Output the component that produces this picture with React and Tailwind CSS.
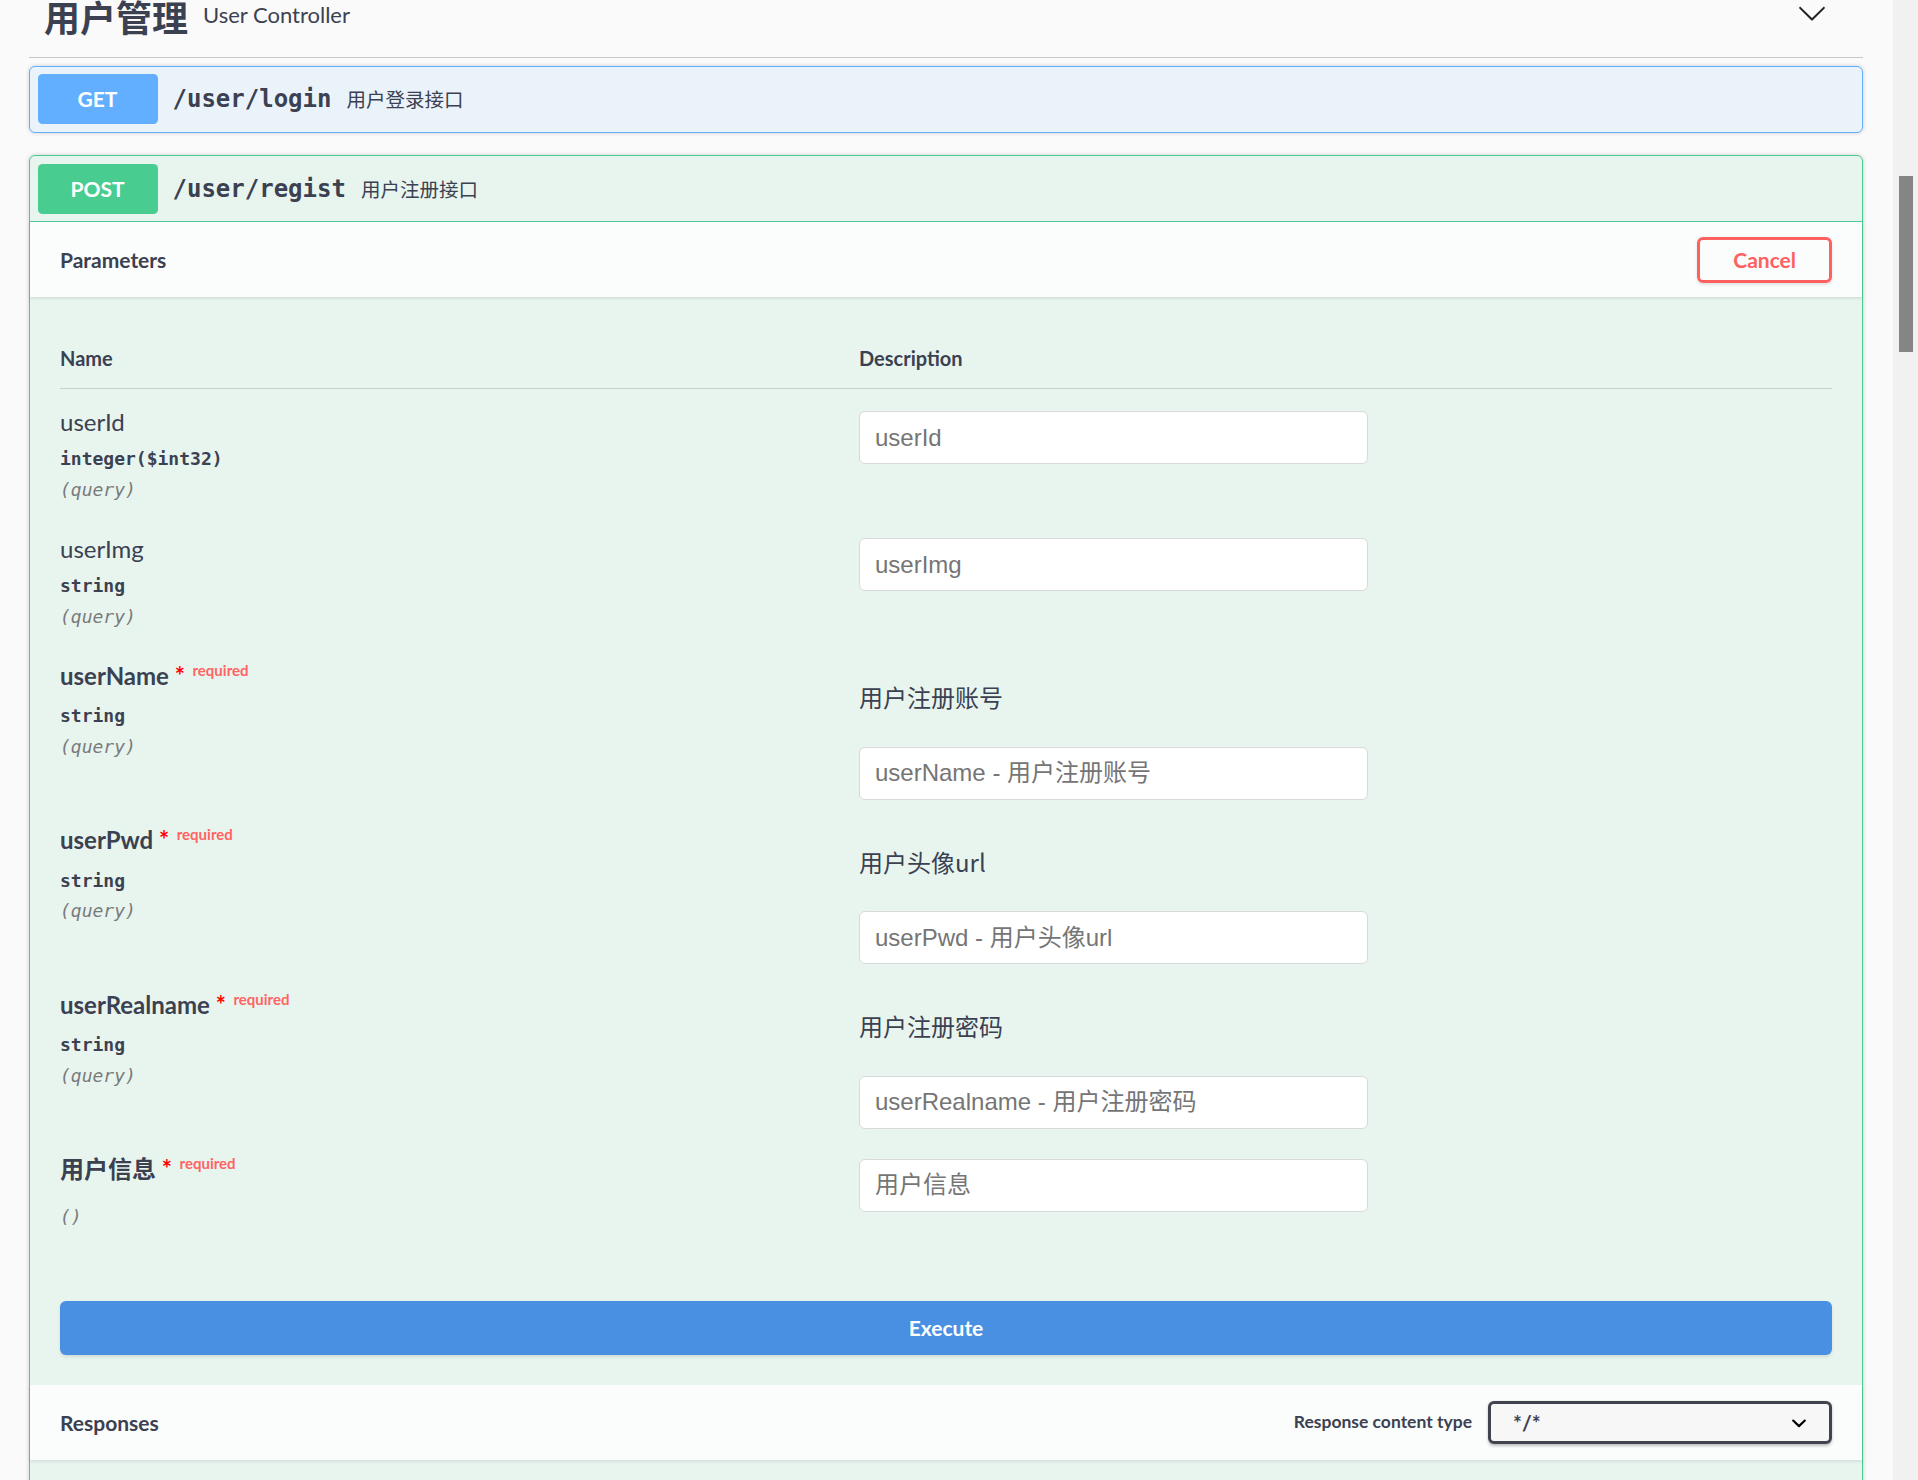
import React from 'react';

const params = [
  { name: 'userId', type: 'integer($int32)', inn: '(query)', required: false, desc: null, ph: 'userId' },
  { name: 'userImg', type: 'string', inn: '(query)', required: false, desc: null, ph: 'userImg' },
  { name: 'userName', type: 'string', inn: '(query)', required: true, desc: '用户注册账号', ph: 'userName - 用户注册账号' },
  { name: 'userPwd', type: 'string', inn: '(query)', required: true, desc: '用户头像url', ph: 'userPwd - 用户头像url' },
  { name: 'userRealname', type: 'string', inn: '(query)', required: true, desc: '用户注册密码', ph: 'userRealname - 用户注册密码' },
  { name: '用户信息', type: '', inn: '()', required: true, desc: null, ph: '用户信息', last: true },
];

function ParamRow({ p }) {
  return (
    <div className="grid grid-cols-[799px_1fr]">
      <div className={p.last ? 'flex flex-col pt-[15px] pb-[13px]' : 'flex flex-col pt-[15px] pb-[15px]'}>
        <div className={`text-[24px] leading-[36px] text-[#3b4151] whitespace-nowrap ${p.required ? 'font-bold' : 'font-normal'}`}>
          {p.name}
          {p.required && (
            <>
              <span className="text-[#ff0000]">&nbsp;*</span>
              <span className="relative top-[-9px] px-[7.5px] text-[15px] font-bold text-[#ff6464]">required</span>
            </>
          )}
        </div>
        <div className="py-[7.5px] text-[18px] leading-[23px] font-[family-name:'DejaVu_Sans_Mono',monospace] font-semibold text-[#3b4151]">
          {p.type}
        </div>
        <div className="text-[18px] leading-[23px] italic font-[family-name:'DejaVu_Sans_Mono',monospace] text-[#7a7a7a]">
          {p.inn}
        </div>
      </div>
      <div className="flex flex-col pt-[15px]">
        {p.desc && (
          <div className="mt-[24.5px] mb-[27px] text-[24px] leading-[30px] text-[#3b4151] font-[family-name:'Noto_Sans_CJK_SC',sans-serif]">
            {p.desc}
          </div>
        )}
        <input
          type="text"
          placeholder={p.ph}
          className="block my-[7.5px] w-[509px] h-[53px] px-[15px] border-[1.5px] border-[#d9d9d9] rounded-[6px] bg-white text-[24px] font-[family-name:'Liberation_Sans','Noto_Sans_CJK_SC',sans-serif] placeholder:text-[#757575] outline-none"
        />
      </div>
    </div>
  );
}

function Summary({ method, path, desc, color, open }) {
  return (
    <div className={`flex items-center p-[7.5px] ${open ? 'border-b-[1.5px] border-[#49cc90]' : ''}`}>
      <div className={`min-w-[120px] py-[9px] px-[22.5px] rounded-[4.5px] text-center text-white text-[21px] leading-[32px] font-bold ${color}`}>
        {method}
      </div>
      <span className="px-[15px] text-[24px] leading-[30px] font-[family-name:'DejaVu_Sans_Mono',monospace] font-semibold text-[#3b4151]">
        {path}
      </span>
      <span className="text-[19.5px] text-[#3b4151] font-[family-name:'Noto_Sans_CJK_SC',sans-serif]">{desc}</span>
    </div>
  );
}

export default function App() {
  return (
    <div className="flex h-[1480px] w-[1918px] overflow-hidden bg-[#fafafa] font-[family-name:Lato,'Noto_Sans_CJK_SC',sans-serif] text-[#3b4151]">
      <div className="flex-1 pl-[29px] pr-[30px]">
        {/* Tag header */}
        <div className="flex items-center h-[58px] pb-[25px] pl-[15px] pr-[36px] border-b-[1.5px] border-[#c4c6cb]">
          <span className="text-[36px] leading-[36px] font-bold font-[family-name:'Noto_Sans_CJK_SC',sans-serif] text-[#3b4151]">用户管理</span>
          <span className="flex-1 px-[15px] mb-[4px] text-[22px] leading-[25px] text-[#3b4151]">User Controller</span>
          <svg width="30" height="30" viewBox="0 0 20 20" className="mb-[6px]">
            <path
              fill="#222"
              d="M17.418 6.109c.272-.268.709-.268.979 0s.271.701 0 .969l-7.908 7.83c-.27.268-.707.268-.979 0l-7.908-7.83c-.27-.268-.27-.701 0-.969.271-.268.709-.268.979 0L10 13.25l7.418-7.141z"
            />
          </svg>
        </div>

        {/* GET block */}
        <div className="mt-[7.5px] mb-[22.5px] border-[1.5px] border-[#61affe] rounded-[6px] bg-[#ebf3fa] shadow-[0_0_4.5px_rgba(0,0,0,0.19)]">
          <Summary method="GET" path="/user/login" desc="用户登录接口" color="bg-[#61affe]" />
        </div>

        {/* POST block */}
        <div className="border-[1.5px] border-[#49cc90] rounded-[6px] bg-[#e8f5ef] shadow-[0_0_4.5px_rgba(0,0,0,0.19)]">
          <Summary method="POST" path="/user/regist" desc="用户注册接口" color="bg-[#49cc90]" open />

          <div className="flex items-center justify-between h-[75px] px-[30px] bg-[#fbfdfc] shadow-[0_1.5px_3px_rgba(0,0,0,0.1)]">
            <h4 className="text-[21px] font-bold text-[#3b4151]">Parameters</h4>
            <button className="px-[33px] py-[7.5px] border-[3px] border-[#ff6060] rounded-[6px] text-[21px] leading-[25px] font-bold text-[#ff6060] bg-transparent shadow-[0_1.5px_3px_rgba(0,0,0,0.1)]">
              Cancel
            </button>
          </div>

          <div className="p-[30px]">
            <div className="grid grid-cols-[799px_1fr] border-b-[1.5px] border-[#3b4151]/20">
              <div className="pt-[16.5px] pb-[16px] text-[20px] leading-[28px] font-bold">Name</div>
              <div className="pt-[16.5px] pb-[16px] text-[20px] leading-[28px] font-bold">Description</div>
            </div>
            {params.map((p) => (
              <ParamRow key={p.name} p={p} />
            ))}
          </div>

          <div className="p-[30px]">
            <button className="w-full h-[54px] rounded-[6px] bg-[#4990e2] text-white text-[21px] font-bold shadow-[0_1.5px_3px_rgba(0,0,0,0.1)]">
              Execute
            </button>
          </div>

          <div className="flex items-center justify-between h-[75px] px-[30px] bg-[#fbfdfc] shadow-[0_1.5px_3px_rgba(0,0,0,0.1)]">
            <h4 className="text-[21px] font-bold text-[#3b4151]">Responses</h4>
            <div className="flex items-center gap-[16px]">
              <span className="text-[17.5px] font-bold text-[#3b4151]">Response content type</span>
              <div className="flex items-center justify-between w-[344px] h-[43px] pl-[22px] pr-[15px] border-[3px] border-[#41444e] rounded-[6px] bg-[#f7f7f7] shadow-[0_1.5px_3px_rgba(0,0,0,0.25)]">
                <span className="text-[21px] font-bold text-[#3b4151]">*/*</span>
                <svg width="30" height="30" viewBox="0 0 20 20">
                  <path
                    fill="#000"
                    d="M13.418 7.859a.695.695 0 01.978 0 .68.68 0 010 .969l-3.908 3.83a.697.697 0 01-.979 0l-3.908-3.83a.68.68 0 010-.969.695.695 0 01.978 0L10 11l3.418-3.141z"
                  />
                </svg>
              </div>
            </div>
          </div>
          <div className="h-[200px]" />
        </div>
      </div>

      {/* scrollbar */}
      <div className="w-[25px] h-full bg-[#f1f1f1] flex justify-center">
        <div className="mt-[176px] w-[14px] h-[176px] bg-[#858585]" />
      </div>
    </div>
  );
}
